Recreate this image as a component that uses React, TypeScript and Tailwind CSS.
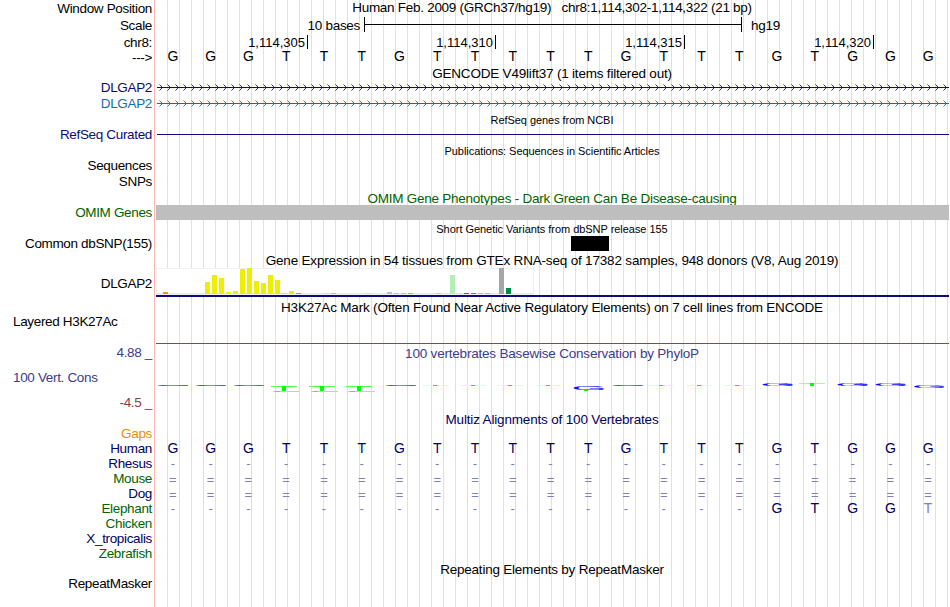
import type { ReactNode } from 'react';
import { clsx } from 'clsx';

const SEQUENCE = 'GGGTTTGTTTTTGTTTGTGGG';

const TICKS = [
  { x: 307, label: '1,114,305' },
  { x: 495, label: '1,114,310' },
  { x: 684, label: '1,114,315' },
  { x: 873, label: '1,114,320' },
];

// x, top, colour
const GTEX_BARS: [number, number, string][] = [
  [163, 292, '#ee9a00'],
  [205, 282, '#eeee00'],
  [212, 275, '#eeee00'],
  [219, 278, '#eeee00'],
  [226, 292, '#eeee00'],
  [233, 291, '#eeee00'],
  [240, 269, '#eeee00'],
  [247, 268, '#eeee00'],
  [254, 281, '#eeee00'],
  [261, 283, '#eeee00'],
  [268, 275, '#eeee00'],
  [275, 280, '#eeee00'],
  [282, 293, '#eeee00'],
  [289, 291, '#eeee00'],
  [296, 293, '#00cdcd'],
  [324, 293, '#eed5d2'],
  [331, 293, '#cdb79e'],
  [366, 293, '#eed5d2'],
  [387, 292, '#cdb79e'],
  [394, 293, '#cdb79e'],
  [401, 293, '#cdb79e'],
  [408, 293, '#9acd32'],
  [436, 293, '#ffb6c1'],
  [450, 275, '#b4eeb4'],
  [457, 293, '#d9d9d9'],
  [464, 293, '#3a5fcd'],
  [471, 293, '#1e90ff'],
  [478, 293, '#cdb79e'],
  [485, 293, '#cdb79e'],
  [499, 268, '#a6a6a6'],
  [506, 288, '#008b45'],
];

const NAVY = 'text-[#000064]';
const GREEN = 'text-[#006400]';

const SPECIES = [
  { name: 'Gaps', color: 'text-[#eb8c0a]', bases: '' },
  { name: 'Human', color: NAVY, bases: SEQUENCE },
  { name: 'Rhesus', color: NAVY, bases: '---------------------' },
  { name: 'Mouse', color: GREEN, bases: '=====================' },
  { name: 'Dog', color: NAVY, bases: '=====================' },
  { name: 'Elephant', color: GREEN, bases: '----------------GTGGt' },
  { name: 'Chicken', color: GREEN, bases: '' },
  { name: 'X_tropicalis', color: NAVY, bases: '' },
  { name: 'Zebrafish', color: GREEN, bases: '' },
];

interface RowProps {
  height: string;
  label?: ReactNode;
  labelClass?: string;
  children?: ReactNode;
}

function Row({ height, label, labelClass, children }: RowProps) {
  return (
    <div className={clsx('flex shrink-0', height)}>
      <div className={clsx('flex w-[155px] shrink-0 items-center justify-end pr-[3px] tracking-[-0.34px]', labelClass)}>
        {label}
      </div>
      <div className="flex w-[795px] shrink-0 items-center">{children}</div>
    </div>
  );
}

function Title({ children, className }: { children: ReactNode; className?: string }) {
  return <div className={clsx('w-full pr-px text-center', className)}>{children}</div>;
}

// Drawing strip of one track, in window coordinates
function Strip({ y, h, children }: { y: number; h: number; children: ReactNode }) {
  return (
    <svg width={795} height={h} viewBox={`155 ${y} 795 ${h}`} className="block shrink-0" shapeRendering="crispEdges">
      {children}
    </svg>
  );
}

function Bases({ bases, className }: { bases: string; className?: string }) {
  return (
    <div className={clsx('-ml-px grid w-[793px] shrink-0 grid-cols-21 pb-0.5 text-center text-[14px] tracking-normal', className)}>
      {bases.split('').map((base, i) => (
        <span
          key={i}
          className={clsx(/[-=t]/.test(base) && 'text-[#8080b4]', /[-=]/.test(base) && 'text-[13px]', base === '=' && 'pt-px')}
        >
          {base.toUpperCase()}
        </span>
      ))}
    </div>
  );
}

function Gene({ y, color }: { y: number; color: string }) {
  return (
    <Strip y={y - 7} h={16}>
      <rect x={157} y={y} width={792} height={1} fill={color} />
      {Array.from({ length: 99 }, (_, i) => (
        <path
          key={i}
          d={`M${159.5 + i * 8} ${y - 2.5}l3 3l-3 3`}
          fill="none"
          stroke={color}
          strokeWidth={0.9}
          shapeRendering="auto"
        />
      ))}
    </Strip>
  );
}

function WideG({ x, y, h }: { x: number; y: number; h: number }) {
  return (
    <text
      transform={`translate(${x} ${y + h}) scale(2.25 ${h / 14.6})`}
      x={-1.1}
      y={0}
      fontSize={20}
      fill="#0a0aff"
      stroke="#0a0aff"
      strokeWidth={0.2}
      className="tracking-normal"
    >
      G
    </text>
  );
}

function Conservation() {
  return (
    <Strip y={361} h={34}>
      <defs>
        <linearGradient id="flat">
          <stop offset="0" stopColor="#b0b0ff" />
          <stop offset="0.15" stopColor="#4646ff" />
          <stop offset="0.45" stopColor="#9090ff" />
          <stop offset="0.9" stopColor="#5050ff" />
          <stop offset="1" stopColor="#8080ff" />
        </linearGradient>
      </defs>
      {[158, 196, 234, 386, 613].map((x) => (
        <rect key={x} x={x} y={385} width={30} height={1} fill="url(#flat)" />
      ))}
      {[271, 309, 346].map((x) => (
        <g key={x}>
          <rect x={x} y={386} width={26} height={1} fill="#50ff50" />
          <rect x={x + 11} y={386} width={4} height={5} fill="#00ff00" />
          <rect x={x + 2} y={391} width={27} height={1} fill="#d2d296" />
          <rect x={x + 4} y={391} width={5} height={1} fill="#b4b450" />
        </g>
      ))}
      {[422, 460, 497, 535, 648, 686, 724].map((x) => (
        <g key={x}>
          <rect x={x} y={385} width={26} height={1} fill="#e1fae6" />
          <rect x={x + 11} y={385} width={4} height={1} fill="#00ff00" />
        </g>
      ))}
      <WideG x={574} y={386} h={4} />
      <rect x={584} y={390} width={4} height={1} fill="#00ff00" />
      <WideG x={763} y={383} h={3} />
      <rect x={799} y={383} width={26} height={1} fill="#a0ffa0" />
      <rect x={810} y={383} width={4} height={3} fill="#00ff00" />
      <WideG x={838} y={383} h={3} />
      <WideG x={876} y={383} h={3} />
      <WideG x={914.5} y={386} h={2} />
    </Strip>
  );
}

export default function App() {
  return (
    <main className="relative flex h-[607px] w-[950px] flex-col overflow-hidden bg-white font-['Liberation_Sans',Arial,sans-serif] text-[13.5px] leading-[15px] tracking-[-0.22px] whitespace-pre text-black">
      {/* guidelines behind the tracks */}
      <div className="absolute inset-y-0 left-[154px] w-px bg-[#ffb4b4]" />
      <div className="absolute inset-y-0 right-0 left-[167px] bg-[linear-gradient(to_right,#dcdcff_1px,transparent_1px)] bg-[length:12px_100%]" />

      <div className="relative flex flex-col">
        <Row height="h-[17px]" label="Window Position">
          <Title className="-mt-0.5 tracking-[-0.28px]">Human Feb. 2009 (GRCh37/hg19)   chr8:1,114,302-1,114,322 (21 bp)</Title>
        </Row>
        <Row height="h-4" label="Scale">
          <span className="w-[209px] shrink-0 pr-1 text-right tracking-[-0.3px]">10 bases</span>
          <span className="-mt-px flex h-[15px] w-[378px] shrink-0 items-center border-x border-black">
            <span className="h-px w-full bg-black" />
          </span>
          <span className="pl-[9px]">hg19</span>
        </Row>
        <Row height="h-[17px]" label="chr8:" labelClass="pt-0.5">
          <div className="flex text-[13px] tracking-normal">
            {TICKS.map((tick, i) => (
              <span
                key={tick.x}
                className="flex h-[14px] items-center justify-end border-r border-black pt-px pr-0.5"
                style={{ width: tick.x + 1 - (i ? TICKS[i - 1].x + 1 : 155) }}
              >
                {tick.label}
              </span>
            ))}
          </div>
        </Row>
        <Row height="h-[15px]" label="--->">
          <Bases bases={SEQUENCE} />
        </Row>
        <Row height="h-[15px]">
          <Title className="pt-0.5 tracking-[-0.2px]">GENCODE V49lift37 (1 items filtered out)</Title>
        </Row>
        <Row height="h-4" label="DLGAP2" labelClass="pb-0.5 text-[#0c0c78]">
          <Gene y={87} color="#0c0c78" />
        </Row>
        <Row height="h-4" label="DLGAP2" labelClass="pb-0.5 text-[#1170aa]">
          <Gene y={103} color="#1170aa" />
        </Row>
        <Row height="h-[15px]">
          <Title className="pt-0.5 text-[11px] tracking-[-0.06px]">RefSeq genes from NCBI</Title>
        </Row>
        <Row height="h-4" label="RefSeq Curated" labelClass="pb-0.5 text-[#0c0c78]">
          <div className="-mt-px ml-0.5 h-px w-[792px] bg-[#0c0c78]" />
        </Row>
        <Row height="h-[15px]">
          <Title className="pt-0.5 text-[11px] tracking-[-0.06px]">Publications: Sequences in Scientific Articles</Title>
        </Row>
        <Row height="h-4" label="Sequences" labelClass="pb-0.5" />
        <Row height="h-4" label="SNPs" labelClass="pb-0.5" />
        <Row height="h-[15px]">
          <Title className="pt-0.5 tracking-[-0.24px] text-[#006400]">OMIM Gene Phenotypes - Dark Green Can Be Disease-causing</Title>
        </Row>
        <Row height="h-[15px]" label="OMIM Genes" labelClass="text-[#006400]">
          <div className="ml-px h-[15px] w-[793px] bg-[#bebebe]" />
        </Row>
        <Row height="h-4">
          <Title className="pt-0.5 text-[11px] tracking-[-0.04px]">Short Genetic Variants from dbSNP release 155</Title>
        </Row>
        <Row height="h-[15px]" label="Common dbSNP(155)">
          <div className="ml-[416px] h-[15px] w-[38px] bg-black" />
        </Row>
        <Row height="h-4">
          <Title className="pt-0.5 tracking-[-0.18px]">Gene Expression in 54 tissues from GTEx RNA-seq of 17382 samples, 948 donors (V8, Aug 2019)</Title>
        </Row>
        <Row height="h-[30px]" label="DLGAP2" labelClass="pt-0.5">
          <Strip y={267} h={30}>
            <rect x={156} y={268} width={378} height={27} fill="#f0f0f0" />
            <rect x={157} y={269} width={376} height={24} fill="#ffffff" />
            <rect x={156} y={293} width={378} height={1} fill="#e8e8e8" />
            {GTEX_BARS.map(([x, top, fill]) => (
              <rect key={x} x={x} y={top} width={5} height={294 - top} fill={fill} />
            ))}
            <rect x={156} y={295} width={793} height={2} fill="#0c0c78" />
          </Strip>
        </Row>
        <Row height="h-[20px]">
          <Title className="tracking-[-0.19px]">H3K27Ac Mark (Often Found Near Active Regulatory Elements) on 7 cell lines from ENCODE</Title>
        </Row>
        <Row height="h-[27px]" label={<span className="-mt-[3px] w-[139px] self-start">Layered H3K27Ac</span>}>
          <div className="ml-px h-px w-[793px] self-end bg-[#6e5a32]" />
        </Row>
        <Row height="h-[17px]" label="4.88 _" labelClass="text-[#3c3c8c]">
          <Title className="pt-px text-[#3c3c8c] tracking-[-0.2px]">100 vertebrates Basewise Conservation by PhyloP</Title>
        </Row>
        <Row
          height="h-[34px]"
          label={<span className="w-[139px]">100 Vert. Cons</span>}
          labelClass="pb-0.5 text-[#3c3c8c]"
        >
          <Conservation />
        </Row>
        <Row height="h-[17px]" label="-4.5 _" labelClass="pb-0.5 text-[#8c3c3c]" />
        <Row height="h-[15px]">
          <Title className={clsx(NAVY, 'tracking-[-0.17px]')}>Multiz Alignments of 100 Vertebrates</Title>
        </Row>
        {SPECIES.map((species) => (
          <Row key={species.name} height="h-[15px]" label={species.name} labelClass={clsx('pb-0.5', species.color)}>
            <Bases bases={species.bases} className={NAVY} />
          </Row>
        ))}
        <Row height="h-[15px]">
          <Title>Repeating Elements by RepeatMasker</Title>
        </Row>
        <Row height="h-[15px]" label="RepeatMasker" labelClass="pb-0.5" />
      </div>
    </main>
  );
}
